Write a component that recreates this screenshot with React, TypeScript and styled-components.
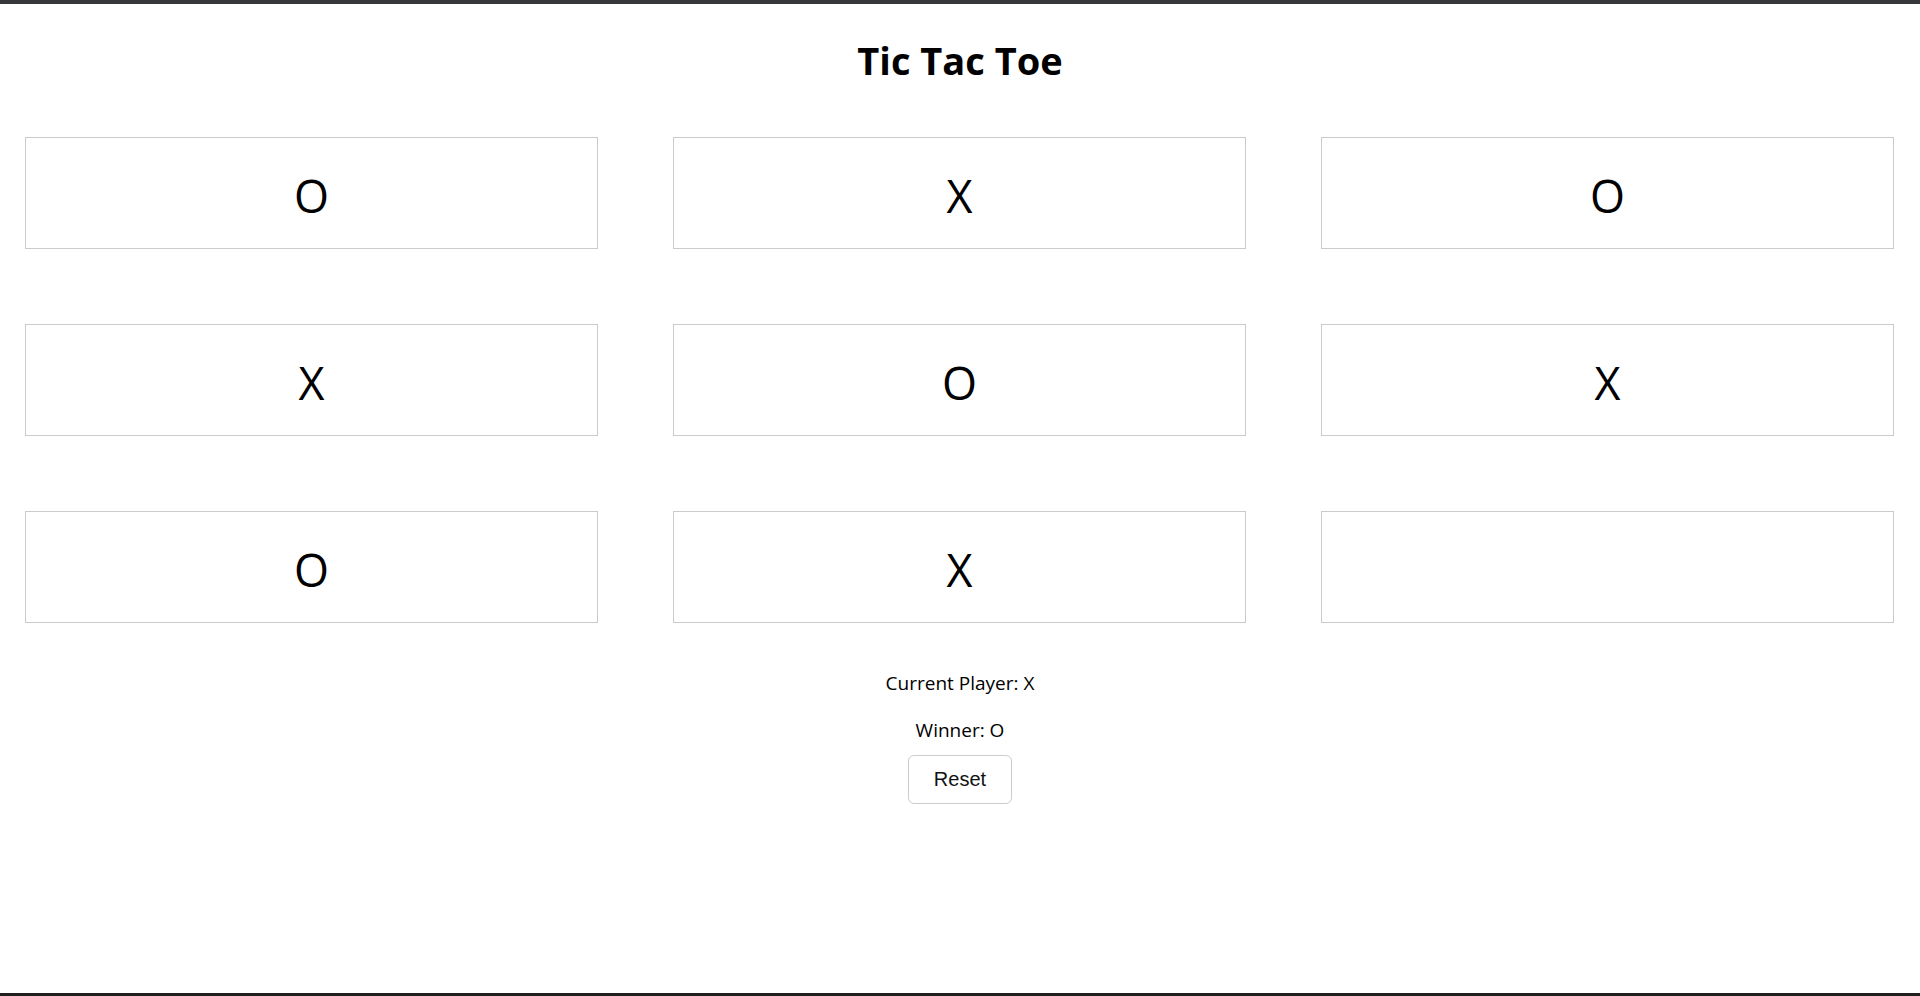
import { useState } from "react";
import styled, { createGlobalStyle } from "styled-components";

const GlobalStyle = createGlobalStyle`
  * {
    box-sizing: border-box;
  }
  html,
  body {
    margin: 0;
    padding: 0;
    background: #fff;
  }
  body {
    font-family: "Segoe UI", "Open Sans", "Noto Sans", sans-serif;
    color: #000;
  }
`;

const Frame = styled.div`
  min-height: 100vh;
  border-top: 4px solid #36373b;
  border-bottom: 3px solid #1f1f1f;
  display: flex;
  flex-direction: column;
  align-items: center;
`;

const Title = styled.h1`
  margin: 29px 0 0;
  font-size: 38px;
  line-height: 54px;
  font-weight: 700;
`;

const Board = styled.div`
  align-self: stretch;
  display: grid;
  grid-template-columns: repeat(3, 1fr);
  gap: 75px;
  padding: 0 26px 0 25px;
  margin-top: 50px;
`;

const Cell = styled.div<{ $filled: boolean }>`
  height: 112px;
  border: 1px solid #cbcbcb;
  display: flex;
  align-items: center;
  justify-content: center;
  font-size: 45px;
  line-height: 1;
  padding-top: 4px;
  cursor: ${(p) => (p.$filled ? "default" : "pointer")};
`;

const Status = styled.div`
  margin-top: 47px;
  display: flex;
  flex-direction: column;
  align-items: center;

  p {
    margin: 0;
    font-size: 19px;
    line-height: 27px;
  }
  p + p {
    margin-top: 20px;
  }
`;

const ResetButton = styled.button`
  margin-top: 11px;
  height: 49px;
  padding: 0 25px;
  background: #fff;
  border: 1px solid #cccccc;
  border-radius: 6px;
  font-family: "Liberation Sans", Arial, sans-serif;
  font-size: 20px;
  color: #111;
  cursor: pointer;
`;

const lines = [
  [0, 1, 2],
  [3, 4, 5],
  [6, 7, 8],
  [0, 3, 6],
  [1, 4, 7],
  [2, 5, 8],
  [0, 4, 8],
  [2, 4, 6],
];

const getWinner = (cells: string[]) => {
  for (const [a, b, c] of lines) {
    if (cells[a] && cells[a] === cells[b] && cells[a] === cells[c]) return cells[a];
  }
  return null;
};

const startBoard = ["O", "X", "O", "X", "O", "X", "O", "X", ""];

export default function App() {
  const [cells, setCells] = useState<string[]>(startBoard);
  const [player, setPlayer] = useState("X");
  const winner = getWinner(cells);

  const play = (i: number) => {
    if (cells[i] || winner) return;
    const next = [...cells];
    next[i] = player;
    setCells(next);
    setPlayer(player === "X" ? "O" : "X");
  };

  const reset = () => {
    setCells(Array(9).fill(""));
    setPlayer("X");
  };

  return (
    <>
      <GlobalStyle />
      <Frame>
        <Title>Tic Tac Toe</Title>
        <Board>
          {cells.map((c, i) => (
            <Cell key={i} $filled={!!c} onClick={() => play(i)}>
              {c}
            </Cell>
          ))}
        </Board>
        <Status>
          <p>Current Player: {player}</p>
          {winner && <p>Winner: {winner}</p>}
          <ResetButton onClick={reset}>Reset</ResetButton>
        </Status>
      </Frame>
    </>
  );
}
